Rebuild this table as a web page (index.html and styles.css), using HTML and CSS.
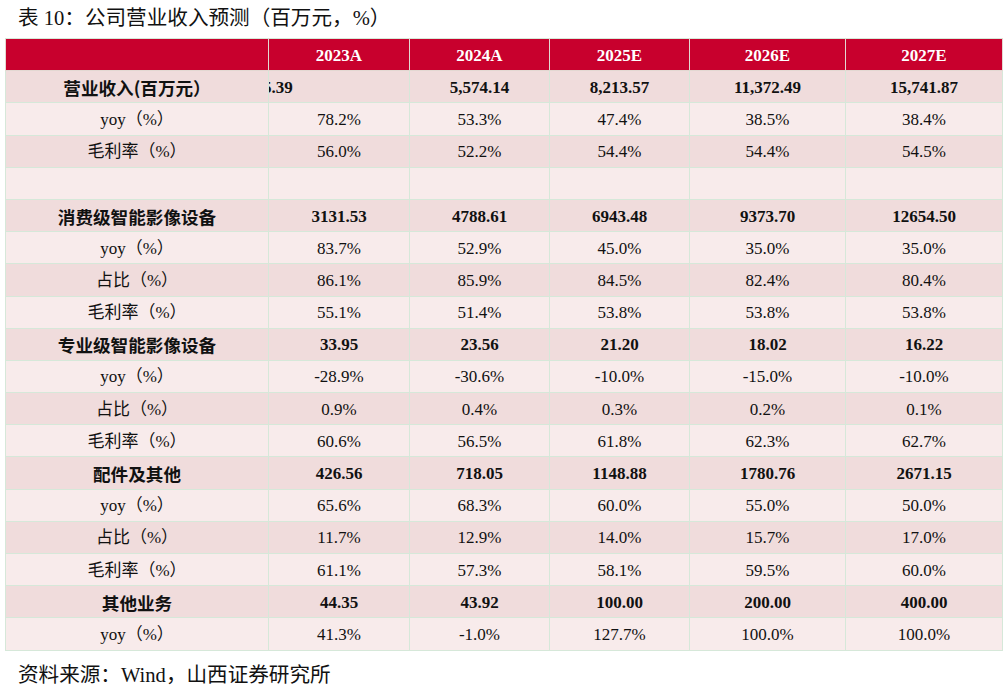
FILE: index.html
```html
<!DOCTYPE html>
<html lang="zh-CN">
<head>
<meta charset="utf-8">
<title>公司营业收入预测</title>
<link rel="stylesheet" href="styles.css">
</head>
<body>
<div class="page">
  <div class="caption">表 10：公司营业收入预测（百万元，%）</div>
  <table class="fin">
    <colgroup>
      <col class="c0"><col class="c1"><col class="c2"><col class="c3"><col class="c4"><col class="c5">
    </colgroup>
    <thead>
      <tr class="head"><th></th><th>2023A</th><th>2024A</th><th>2025E</th><th>2026E</th><th>2027E</th></tr>
    </thead>
    <tbody>
      <tr class="dark bold"><td class="lbl">营业收入(百万元）</td><td class="clipcell"><div class="clip">5.39</div></td><td>5,574.14</td><td>8,213.57</td><td>11,372.49</td><td>15,741.87</td></tr>
      <tr class="light"><td class="lbl">yoy（%）</td><td>78.2%</td><td>53.3%</td><td>47.4%</td><td>38.5%</td><td>38.4%</td></tr>
      <tr class="dark"><td class="lbl">毛利率（%）</td><td>56.0%</td><td>52.2%</td><td>54.4%</td><td>54.4%</td><td>54.5%</td></tr>
      <tr class="light"><td class="lbl"></td><td></td><td></td><td></td><td></td><td></td></tr>
      <tr class="dark bold"><td class="lbl">消费级智能影像设备</td><td>3131.53</td><td>4788.61</td><td>6943.48</td><td>9373.70</td><td>12654.50</td></tr>
      <tr class="light"><td class="lbl">yoy（%）</td><td>83.7%</td><td>52.9%</td><td>45.0%</td><td>35.0%</td><td>35.0%</td></tr>
      <tr class="dark"><td class="lbl">占比（%）</td><td>86.1%</td><td>85.9%</td><td>84.5%</td><td>82.4%</td><td>80.4%</td></tr>
      <tr class="light"><td class="lbl">毛利率（%）</td><td>55.1%</td><td>51.4%</td><td>53.8%</td><td>53.8%</td><td>53.8%</td></tr>
      <tr class="dark bold"><td class="lbl">专业级智能影像设备</td><td>33.95</td><td>23.56</td><td>21.20</td><td>18.02</td><td>16.22</td></tr>
      <tr class="light"><td class="lbl">yoy（%）</td><td>-28.9%</td><td>-30.6%</td><td>-10.0%</td><td>-15.0%</td><td>-10.0%</td></tr>
      <tr class="dark"><td class="lbl">占比（%）</td><td>0.9%</td><td>0.4%</td><td>0.3%</td><td>0.2%</td><td>0.1%</td></tr>
      <tr class="light"><td class="lbl">毛利率（%）</td><td>60.6%</td><td>56.5%</td><td>61.8%</td><td>62.3%</td><td>62.7%</td></tr>
      <tr class="dark bold"><td class="lbl">配件及其他</td><td>426.56</td><td>718.05</td><td>1148.88</td><td>1780.76</td><td>2671.15</td></tr>
      <tr class="light"><td class="lbl">yoy（%）</td><td>65.6%</td><td>68.3%</td><td>60.0%</td><td>55.0%</td><td>50.0%</td></tr>
      <tr class="dark"><td class="lbl">占比（%）</td><td>11.7%</td><td>12.9%</td><td>14.0%</td><td>15.7%</td><td>17.0%</td></tr>
      <tr class="light"><td class="lbl">毛利率（%）</td><td>61.1%</td><td>57.3%</td><td>58.1%</td><td>59.5%</td><td>60.0%</td></tr>
      <tr class="dark bold"><td class="lbl">其他业务</td><td>44.35</td><td>43.92</td><td>100.00</td><td>200.00</td><td>400.00</td></tr>
      <tr class="light"><td class="lbl">yoy（%）</td><td>41.3%</td><td>-1.0%</td><td>127.7%</td><td>100.0%</td><td>100.0%</td></tr>
    </tbody>
  </table>
  <div class="source">资料来源：Wind，山西证券研究所</div>
</div>
</body>
</html>
```

FILE: styles.css
```css
html, body {
  margin: 0;
  padding: 0;
  background: #ffffff;
}

.page {
  width: 1008px;
  height: 691px;
  padding: 4px 0 0 5px;
  box-sizing: border-box;
  font-family: "Liberation Serif", "Noto Sans CJK SC", serif;
  color: #111111;
}

.caption {
  font-size: 20.6px;
  line-height: 28px;
  height: 28px;
  padding-left: 13px;
  white-space: nowrap;
}

.fin {
  margin-top: 6px;
  border-collapse: collapse;
  table-layout: fixed;
  width: 997px;
  font-size: 17px;
}

.c0 { width: 263px; }
.c1 { width: 141px; }
.c2 { width: 140px; }
.c3 { width: 140px; }
.c4 { width: 156px; }
.c5 { width: 157px; }

.fin th,
.fin td {
  border: 1px solid #d6e8d9;
  height: 29.2px;
  padding: 2px 0 0 0;
  text-align: center;
  vertical-align: middle;
  line-height: 20px;
  white-space: nowrap;
}

.head th {
  background: #c8002d;
  color: #ffffff;
  font-weight: bold;
  border-color: #e3d8d2;
  border-top-color: #d6e8d9;
}

.dark td { background: #f0dcdc; }
.light td { background: #f8ebeb; }

.bold td { font-weight: bold; }

.lbl {
  font-family: "Liberation Serif", "Noto Sans CJK SC", sans-serif;
}

.bold .lbl {
  font-family: "Noto Sans CJK SC", sans-serif;
  font-size: 17.6px;
}

.clipcell {
  text-align: left;
}

.clip {
  overflow: hidden;
  white-space: nowrap;
  text-indent: -6px;
  text-align: left;
}

.source {
  margin-top: 10px;
  padding-left: 13px;
  font-size: 20.6px;
  line-height: 28px;
  white-space: nowrap;
}
```
